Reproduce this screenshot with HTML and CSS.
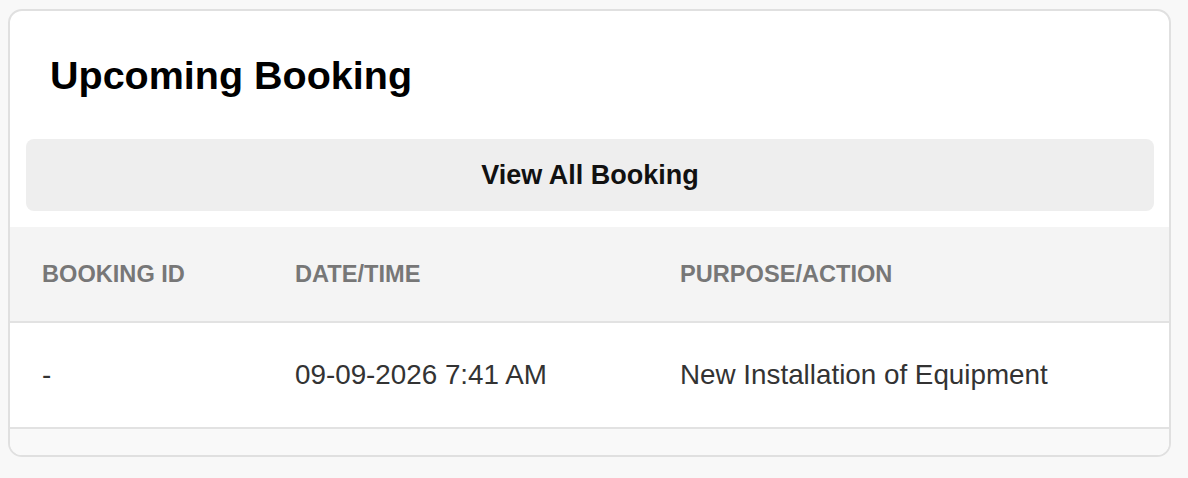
FILE: index.html
```html
<!DOCTYPE html>
<html>
<head lang="en">
    <meta charset="UTF-8">
    <title>Upcoming Booking</title>
    <link rel="stylesheet" href="styles.css">
</head>
<body>
    <div class="card">
        <h2 class="card-title">Upcoming Booking</h2>
        <div class="card-actions">
            <button class="btn-all">View All Booking</button>
        </div>
        <table class="booking-table">
            <colgroup>
                <col class="col-id">
                <col class="col-date">
                <col>
            </colgroup>
            <thead>
                <tr>
                    <th>Booking ID</th>
                    <th>Date/Time</th>
                    <th>Purpose/Action</th>
                </tr>
            </thead>
            <tbody>
                <tr>
                    <td>-</td>
                    <td>09-09-2026 7:41 AM</td>
                    <td>New Installation of Equipment</td>
                </tr>
            </tbody>
        </table>
        <div class="card-foot"></div>
    </div>
</body>
</html>
```

FILE: styles.css
```css
* {
    margin: 0;
    padding: 0;
    box-sizing: border-box;
}
body {
    background: #f8f8f8;
    font-family: "Liberation Sans", Arial, sans-serif;
    padding: 9px 17px 0 8px;
}
.card {
    background: #fff;
    border: 2px solid #e0e0e0;
    border-radius: 14px;
    overflow: hidden;
}
.card-title {
    font-size: 39.5px;
    line-height: 46px;
    font-weight: bold;
    color: #000;
    padding: 41px 0 0 40px;
    height: 128px;
}
.card-actions {
    padding: 0 15px 16px 16px;
}
.btn-all {
    display: block;
    width: 100%;
    height: 72px;
    border: none;
    border-radius: 8px;
    background: #eeeeee;
    font-family: inherit;
    font-size: 27px;
    font-weight: bold;
    color: #111;
}
.booking-table {
    width: 100%;
    border-collapse: collapse;
    table-layout: fixed;
}
.col-id {
    width: 253px;
}
.col-date {
    width: 385px;
}
.booking-table th {
    background: #f4f4f4;
    height: 95px;
    text-align: left;
    padding-left: 32px;
    font-size: 23.6px;
    font-weight: bold;
    text-transform: uppercase;
    color: #777;
    border-bottom: 2px solid #e2e2e2;
}
.booking-table td {
    height: 106px;
    padding-left: 32px;
    font-size: 27.8px;
    color: #333;
    border-bottom: 2px solid #e2e2e2;
}
.card-foot {
    height: 26px;
    background: #f9f9f9;
}
```
